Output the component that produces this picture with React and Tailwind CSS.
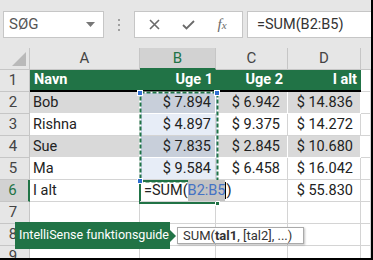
import React from "react";

function Cell({ children, className = "" }) {
  return (
    <div className={`h-[22px] flex items-center overflow-hidden whitespace-nowrap border-r border-b border-[#d4d4d4] ${className}`}>
      {children}
    </div>
  );
}

const data = [
  ["Bob", "$ 7.894", "$ 6.942", "$ 14.836"],
  ["Rishna", "$ 4.897", "$ 9.375", "$ 14.272"],
  ["Sue", "$ 7.835", "$ 2.845", "$ 10.680"],
  ["Ma", "$ 9.584", "$ 6.458", "$ 16.042"],
];

function RowHead({ n, active }) {
  return (
    <div
      className={`h-[22px] flex items-center justify-center pr-[3px] text-[15px] border-b border-[#c6c6c6] ${
        active ? "bg-[#d2d2d2] text-[#217346] border-r-2 border-r-[#217346]" : "bg-[#e6e6e6] text-[#444] border-r border-r-[#c6c6c6]"
      }`}
    >
      {n}
    </div>
  );
}

export default function App() {
  return (
    <div className="w-[373px] h-[260px] border-r-2 border-b-2 border-black bg-white overflow-hidden relative font-['Roboto',sans-serif] text-[#222]">
      {/* toolbar */}
      <div className="h-[48px] bg-[#e6e6e6] flex items-start pt-[11px] pl-[3px]">
        <div className="w-[101px] h-[27px] bg-white border border-[#c6c6c6] flex items-center justify-between pl-[5px] pr-[8px]">
          <span className="text-[15px] text-[#555] leading-none">SØG</span>
          <svg width="9" height="5" viewBox="0 0 9 5">
            <path d="M0 0h9L4.5 5z" fill="#777" />
          </svg>
        </div>
        <div className="w-[30px] h-[27px] flex flex-col items-center justify-center gap-[3px]">
          <div className="w-[2px] h-[2px] bg-[#a0a0a0]" />
          <div className="w-[2px] h-[2px] bg-[#a0a0a0]" />
          <div className="w-[2px] h-[2px] bg-[#a0a0a0]" />
        </div>
        <div className="w-[109px] h-[27px] bg-white border border-[#c6c6c6] flex items-center pl-[2px]">
          <div className="w-[34px] flex justify-center">
            <svg width="11" height="11" viewBox="0 0 11 11">
              <path d="M1 1L10 10M10 1L1 10" stroke="#6a6a6a" strokeWidth="1.6" />
            </svg>
          </div>
          <div className="w-[34px] flex justify-center">
            <svg width="13" height="10" viewBox="0 0 13 10">
              <path d="M1 5L4.5 8.5L12 1" stroke="#6a6a6a" strokeWidth="1.8" fill="none" />
            </svg>
          </div>
          <div className="w-[34px] flex justify-center">
            <span className="font-['Liberation_Serif',serif] italic text-[15px] text-[#6a6a6a] leading-none">
              f<span className="text-[11px]">x</span>
            </span>
          </div>
        </div>
        <div className="ml-[4px] flex-1 h-[27px] bg-white border border-r-0 border-[#c6c6c6] flex items-center pl-[9px] text-[14.5px] text-[#333]">
          =SUM(B2:B5)
        </div>
      </div>

      {/* grid */}
      <div className="grid grid-cols-[30px_110px_76px_72px_73px_10px]">
        {/* column headers */}
        <div className="h-[22px] bg-[#e6e6e6] border-r border-b border-[#c6c6c6] flex items-end justify-end pr-[3px] pb-[3px]">
          <svg width="14" height="14" viewBox="0 0 14 14">
            <path d="M14 0V14H0z" fill="#b9b9b9" />
          </svg>
        </div>
        <div className="h-[22px] bg-[#e6e6e6] border-r border-b border-[#c6c6c6] flex items-center justify-center text-[15px] text-[#444]">A</div>
        <div className="h-[22px] bg-[#d2d2d2] border-r border-[#c6c6c6] border-b-2 border-b-[#217346] flex items-center justify-center text-[15px] text-[#217346]">B</div>
        <div className="h-[22px] bg-[#e6e6e6] border-r border-b border-[#c6c6c6] flex items-center justify-center text-[15px] text-[#444]">C</div>
        <div className="h-[22px] bg-[#e6e6e6] border-r border-b border-[#c6c6c6] flex items-center justify-center text-[15px] text-[#444]">D</div>
        <div className="h-[22px] bg-[#e6e6e6] border-b border-[#c6c6c6]" />

        {/* row 1 */}
        <RowHead n="1" />
        <div className="h-[22px] bg-[#217346] border-b-2 border-black text-white font-bold text-[14.5px] flex items-center pl-[4px]">Navn</div>
        <div className="h-[22px] bg-[#217346] border-b-2 border-black text-white font-bold text-[14.5px] flex items-center justify-end pr-[3px]">Uge 1</div>
        <div className="h-[22px] bg-[#217346] border-b-2 border-black text-white font-bold text-[14.5px] flex items-center justify-end pr-[5px]">Uge 2</div>
        <div className="h-[22px] bg-[#217346] border-b-2 border-black text-white font-bold text-[14.5px] flex items-center justify-end pr-[4px]">I alt</div>
        <Cell />

        {data.map((r, i) => {
          const gray = i % 2 === 0;
          return (
            <React.Fragment key={i}>
              <RowHead n={String(i + 2)} />
              <Cell className={`text-[14.5px] pl-[3px] ${gray ? "bg-[#d9d9d9] border-white" : ""}`}>{r[0]}</Cell>
              <Cell className={`text-[14.5px] justify-end pr-[4px] ${gray ? "bg-[#c8cfda] border-white" : "bg-[#e7edf7]"}`}>{r[1]}</Cell>
              <Cell className={`text-[14.5px] justify-end pr-[7px] ${gray ? "bg-[#d9d9d9] border-white" : ""}`}>{r[2]}</Cell>
              <Cell className={`text-[14.5px] justify-end pr-[7px] ${gray ? "bg-[#d9d9d9] border-white" : ""}`}>{r[3]}</Cell>
              <Cell />
            </React.Fragment>
          );
        })}

        {/* row 6 */}
        <RowHead n="6" active />
        <Cell className="text-[14.5px] pl-[3px]">I alt</Cell>
        <div className="h-[22px] flex items-center whitespace-nowrap border-r border-b border-[#d4d4d4] pl-[4px] text-[14.5px] relative z-10">
          <span>=SUM(</span>
          <span className="bg-[#c3c3c3] text-[#4472c4]">B2:B5</span>
          <span className="border-l border-black h-[17px] flex items-center">)</span>
        </div>
        <Cell />
        <Cell className="text-[14.5px] justify-end pr-[7px]">$ 55.830</Cell>
        <Cell />

        {["7", "8", "9"].map((n) => (
          <React.Fragment key={n}>
            <RowHead n={n} />
            <Cell />
            <Cell />
            <Cell />
            <Cell />
            <Cell />
          </React.Fragment>
        ))}
      </div>

      {/* marching ants selection B2:B5 */}
      <svg className="absolute left-[139px] top-[91px]" width="80" height="92">
        <rect x="2" y="2" width="76" height="88" fill="none" stroke="#4472c4" strokeWidth="1" />
        <rect x="1.5" y="1.5" width="77" height="89" fill="none" stroke="white" strokeWidth="2" />
        <rect x="1.5" y="1.5" width="77" height="89" fill="none" stroke="#217346" strokeWidth="2" strokeDasharray="4 2" />
      </svg>
      {/* active cell B6 */}
      <div className="absolute left-[139px] top-[180px] w-[79px] h-[24px] border-2 border-[#217346]" />
      {/* handles */}
      <div className="absolute left-[137px] top-[90px] w-[6px] h-[6px] bg-[#2f6fd0] border border-white" />
      <div className="absolute left-[214px] top-[90px] w-[6px] h-[6px] bg-[#2f6fd0] border border-white" />
      <div className="absolute left-[137px] top-[178px] w-[6px] h-[6px] bg-[#2f6fd0] border border-white" />
      <div className="absolute left-[215px] top-[201px] w-[5px] h-[5px] bg-[#217346] border border-white" />

      {/* tooltip */}
      <div className="absolute left-[15px] top-[222px] h-[27px] flex items-center">
        <div className="h-[27px] w-[155px] bg-[#217346] text-white text-[12.5px] flex items-center pl-[4px] whitespace-nowrap">
          IntelliSense funktionsguide
        </div>
        <div className="w-0 h-0 border-y-[6px] border-y-transparent border-l-[6px] border-l-[#217346]" />
      </div>
      <div className="absolute left-[177px] top-[227px] w-[127px] h-[17px] bg-white border border-[#aaa] shadow-[1px_1px_2px_rgba(0,0,0,0.25)] flex items-center pl-[5px] text-[13px] text-[#333] whitespace-nowrap">
        SUM(<b>tal1</b>, [tal2], ...)
      </div>
    </div>
  );
}
